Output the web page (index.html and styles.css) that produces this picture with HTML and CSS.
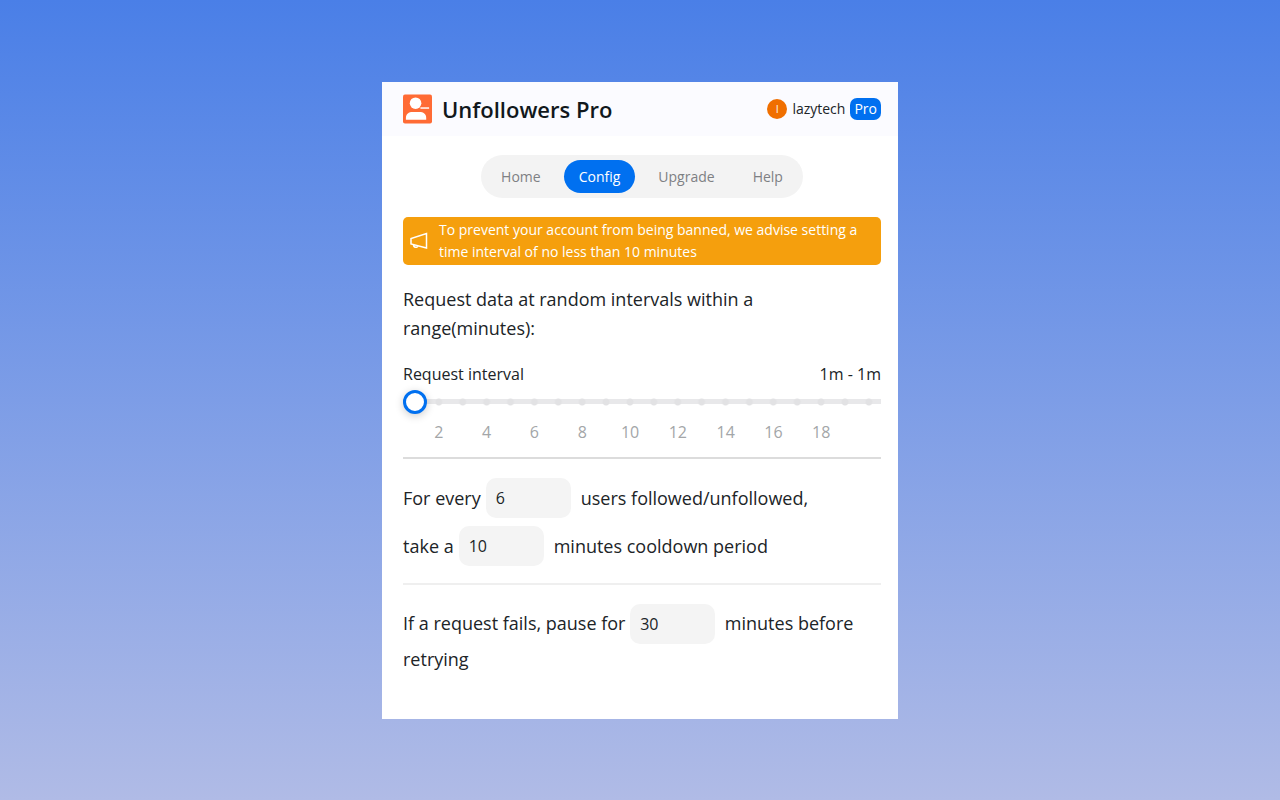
FILE: index.html
```html
<!DOCTYPE html>
<html lang="en">
<head>
    <meta charset="UTF-8">
    <meta name="viewport" content="width=device-width, initial-scale=1.0">
    <title>Unfollowers Pro</title>
    <link rel="stylesheet" href="styles.css">
</head>
<body>
    <div class="popup">
        <header class="header">
            <svg class="logo" viewBox="0 0 30 30" aria-hidden="true">
                <rect width="30" height="30" rx="2" fill="#ff6b35"/>
                <circle cx="13" cy="9" r="6" fill="#fff"/>
                <path d="M3 26v-2c0-4 3-6 7-6h7c4 0 7 2 7 6v2z" fill="#fff"/>
                <path d="M18 14h9" stroke="#fff" stroke-width="1.5"/>
            </svg>
            <h1>Unfollowers Pro</h1>
            <div class="user">
                <span class="avatar">l</span>
                <span>lazytech</span>
                <span class="badge">Pro</span>
            </div>
        </header>
        <main class="content">
            <nav class="tabs">
                <button class="tab">Home</button>
                <button class="tab active">Config</button>
                <button class="tab">Upgrade</button>
                <button class="tab">Help</button>
            </nav>
            <div class="notice">
                <svg class="notice-icon" viewBox="0 0 18 18" aria-hidden="true">
                    <path d="M1 6.500v5.500l15.500 4V1.500z M3.500 12.700c0 3 4 3.500 4.300 1.200" fill="none" stroke="#fff" stroke-width="1.500"/>
                </svg>
                <p>To prevent your account from being banned, we advise setting a time interval of no less than 10 minutes</p>
            </div>
            <p class="intro">Request data at random intervals within a range(minutes):</p>
            <div class="slider-head">
                <label for="interval">Request interval</label>
                <output for="interval">1m - 1m</output>
            </div>
            <input class="slider" type="range" id="interval" min="1" max="20" value="1">
            <div class="marks">
                <span></span><span>2</span><span></span><span>4</span><span></span><span>6</span>
                <span></span><span>8</span><span></span><span>10</span><span></span><span>12</span>
                <span></span><span>14</span><span></span><span>16</span><span></span><span>18</span>
            </div>
            <hr class="line">
            <div class="row">
                <label for="users">For every</label>
                <input class="field" type="text" id="users" value="6">
                <span>users followed/unfollowed,</span>
            </div>
            <div class="row">
                <label for="cooldown">take a</label>
                <input class="field" type="text" id="cooldown" value="10">
                <span>minutes cooldown period</span>
            </div>
            <hr class="line light">
            <div class="retry">
                <label for="pause">If a request fails, pause for</label>
                <input class="field" type="text" id="pause" value="30">
                minutes before retrying
            </div>
        </main>
    </div>
</body>
</html>
```

FILE: styles.css
```css
* {
    box-sizing: border-box;
}
body {
    margin: 0;
    min-height: 100vh;
    display: flex;
    align-items: center;
    justify-content: center;
    background: linear-gradient(#4a7fe7, #b0bbe6);
    color: #202427;
    font-family: "Open Sans", sans-serif;
    font-size: 18px;
}
h1, p {
    margin: 0;
}
.popup {
    width: 100%;
    max-width: 516px;
    background: #fff;
}
.header {
    display: flex;
    align-items: center;
    gap: 10px;
    padding: 12px 17px 12px 21px;
    background: #fbfbff;
}
.logo {
    width: 29px;
    height: 30px;
}
h1 {
    flex: 1;
    font-size: 22px;
    font-weight: 600;
    line-height: 30px;
    color: #11181c;
}
.user {
    display: flex;
    align-items: center;
    gap: 5px;
    font-size: 14px;
    line-height: 22px;
}
.avatar {
    width: 20px;
    height: 20px;
    border-radius: 50%;
    background: #f06f00;
    color: #fff;
    font-size: 10px;
    line-height: 20px;
    text-align: center;
}
.badge {
    padding: 0 4px;
    border-radius: 7px;
    background: #0070f0;
    color: #fff;
}
.content {
    padding: 19px 17px 45px 21px;
}
.tabs {
    display: flex;
    width: fit-content;
    margin: 0 auto 19px;
    padding: 5px;
    gap: 8px;
    border-radius: 22px;
    background: #f3f3f3;
}
.tab {
    height: 33px;
    padding: 0 15px;
    border: none;
    border-radius: 17px;
    background: none;
    color: #7e8083;
    font: inherit;
    font-size: 14px;
    cursor: pointer;
}
.tab.active {
    background: #0070f0;
    color: #fff;
}
.notice {
    display: flex;
    align-items: center;
    gap: 11px;
    padding: 2px 7px;
    border-radius: 5px;
    background: #f59f0d;
    color: #fff;
    font-size: 14px;
    line-height: 22px;
}
.notice-icon {
    flex: none;
    width: 18px;
    height: 18px;
}
.intro {
    margin: 20px 0 19px;
    line-height: 29px;
}
.slider-head {
    display: flex;
    justify-content: space-between;
    font-size: 16px;
    line-height: 24px;
}
.slider {
    display: block;
    width: 100%;
    height: 24px;
    margin: 4px 0 6px;
    appearance: none;
    background:
        radial-gradient(circle, #e2e2e4 3px, transparent 4px) 0 0 / 5% 100%,
        linear-gradient(#e8e8ea, #e8e8ea) center / 100% 5px no-repeat;
}
.slider::-webkit-slider-thumb {
    appearance: none;
    width: 24px;
    height: 24px;
    border: 3px solid #0070f0;
    border-radius: 50%;
    background: #fff;
    box-shadow: 0 2px 8px rgba(0, 0, 0, 0.2);
}
.marks {
    display: grid;
    grid-template-columns: repeat(20, 1fr);
    justify-items: center;
    color: #a3a6a8;
    font-size: 16px;
    line-height: 24px;
}
.line {
    height: 2px;
    margin: 13px 0 19px;
    border: none;
    background: #dcdcdc;
}
.line.light {
    margin: 17px 0 19px;
    background: #efefef;
}
.row {
    display: flex;
    align-items: center;
    gap: 5px;
}
.row + .row {
    margin-top: 8px;
}
.field {
    width: 85px;
    height: 40px;
    margin-right: 5px;
    padding: 0 10px;
    border: none;
    border-radius: 10px;
    background: #f4f4f4;
    color: inherit;
    font: inherit;
    font-size: 16px;
}
.retry {
    line-height: 30px;
}
```
